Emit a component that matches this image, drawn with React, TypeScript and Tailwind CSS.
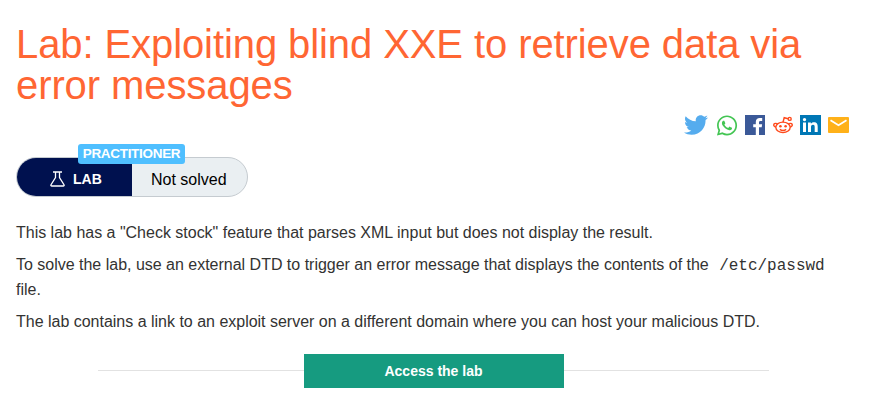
import { FaTwitter, FaWhatsapp } from "react-icons/fa";

function ShareIcons() {
  return (
    <div className="flex h-[22px] items-center justify-end pr-2">
      <FaTwitter className="h-6 w-6 text-[#55acee]" />
      <FaWhatsapp className="ml-[7px] h-[23px] w-6 text-[#43c553]" />
      <svg className="ml-[6px]" width="20" height="20" viewBox="0 0 20 20">
        <path fill="#3b5998" d="M0 0h20v20h-6v-7.700h2.700l.4-3H14V7.400c0-.9.3-1.500 1.500-1.500h1.700V3.100c-.3 0-1.300-.1-2.400-.1-2.400 0-4 1.400-4 4.100v2.200H8.200v3h2.600V20H0z" />
      </svg>
      <svg className="ml-2" width="20" height="20" viewBox="0 0 20 20" fill="none" stroke="#ff4a1c" strokeWidth="1.400">
        <ellipse cx="10" cy="12.300" rx="7.200" ry="5.200" />
        <path d="M2.800 12C.6 11.400.2 9.600 1.500 8.700c1-.7 2.300-.3 2.800.5M17.200 12c2.200-.6 2.600-2.400 1.300-3.300-1-.7-2.300-.3-2.800.5M10 7.300l1.200-4.600 4 1M6.800 14.300c1.800 1.200 4.600 1.200 6.400 0" />
        <circle cx="16.700" cy="3.900" r="1.500" />
        <circle cx="7.400" cy="11.200" r="1.300" fill="#ff4a1c" stroke="none" />
        <circle cx="12.600" cy="11.200" r="1.300" fill="#ff4a1c" stroke="none" />
      </svg>
      <svg className="ml-[7px]" width="21" height="20" viewBox="0 0 21 20">
        <path fill="#0077b5" d="M0 0h21v20H0z" />
        <path fill="#fff" d="M3 7.500h3V17H3zM4.500 2.900a1.700 1.700 0 1 1 0 3.400 1.700 1.700 0 0 1 0-3.400zM8 7.500h2.900v1.300c.5-.9 1.500-1.600 3-1.600 3 0 3.800 2 3.800 4.600V17h-3v-4.600c0-1.300-.1-2.600-1.700-2.600S11 11 11 12.300V17H8z" />
      </svg>
      <svg className="ml-[7px]" width="21" height="16" viewBox="0 0 21 16">
        <rect width="21" height="16" rx="1" fill="#ffb119" />
        <path d="M2.500 3.200l8 5 8-5" fill="none" stroke="#fff" strokeWidth="1.800" />
      </svg>
    </div>
  );
}

function LabStatus() {
  return (
    <div className="relative mt-[21px] flex h-10 w-[232px] rounded-full border border-[#c5cbd0] bg-[#eaeff2]">
      <div className="flex w-[115px] items-center rounded-l-full bg-[#00114f] pl-[33px] pt-[5px] text-[14px] font-bold text-white">
        <svg width="15" height="16" viewBox="0 0 15 16" fill="none" stroke="#fff" strokeWidth="1.300" className="-mt-[2px] mr-2">
          <path d="M3 1h9M5.500 1v5.500L1 13.700c-.4.800 0 1.300.8 1.300h11.400c.8 0 1.200-.5.800-1.300L9.500 6.500V1" />
        </svg>
        LAB
      </div>
      <div className="flex flex-1 items-center pl-[19px] pt-[5px] text-[16px] text-black">Not solved</div>
      <div className="absolute -top-[14px] left-[61px] flex h-5 w-[107px] items-center justify-center rounded-[3px] bg-[#4fbfff] text-[13.500px] font-bold tracking-[-0.3px] text-white">
        PRACTITIONER
      </div>
    </div>
  );
}

export default function App() {
  return (
    <main className="h-[403px] overflow-hidden bg-white px-4 pt-6 font-['Liberation_Sans',Arial,sans-serif] text-[#333332]">
      <h1 className="mb-2 text-[40px] leading-[41px] tracking-[-0.09px] text-[#ff6633]">
        Lab: Exploiting blind XXE to retrieve data via<br />error messages
      </h1>
      <ShareIcons />
      <LabStatus />
      <div className="mt-[23px] space-y-[7px] text-[16px] leading-[25px] tracking-[-0.01px]">
        <p className="whitespace-nowrap">This lab has a "Check stock" feature that parses XML input but does not display the result.</p>
        <p className="whitespace-nowrap">
          To solve the lab, use an external DTD to trigger an error message that displays the contents of the{" "}
          <code className="ml-[6px] font-['Liberation_Mono',monospace] text-[16px] leading-none">/etc/passwd</code>
          <br />file.
        </p>
        <p className="whitespace-nowrap">The lab contains a link to an exploit server on a different domain where you can host your malicious DTD.</p>
      </div>
      <div className="ml-[82px] mt-5 flex w-[671px] items-start">
        <div className="mt-4 h-px flex-1 bg-[#e2e2e2]" />
        <button className="h-[34px] w-[260px] bg-[#169b80] text-[14px] font-bold text-white">Access the lab</button>
        <div className="mt-4 h-px flex-1 bg-[#e2e2e2]" />
      </div>
    </main>
  );
}
